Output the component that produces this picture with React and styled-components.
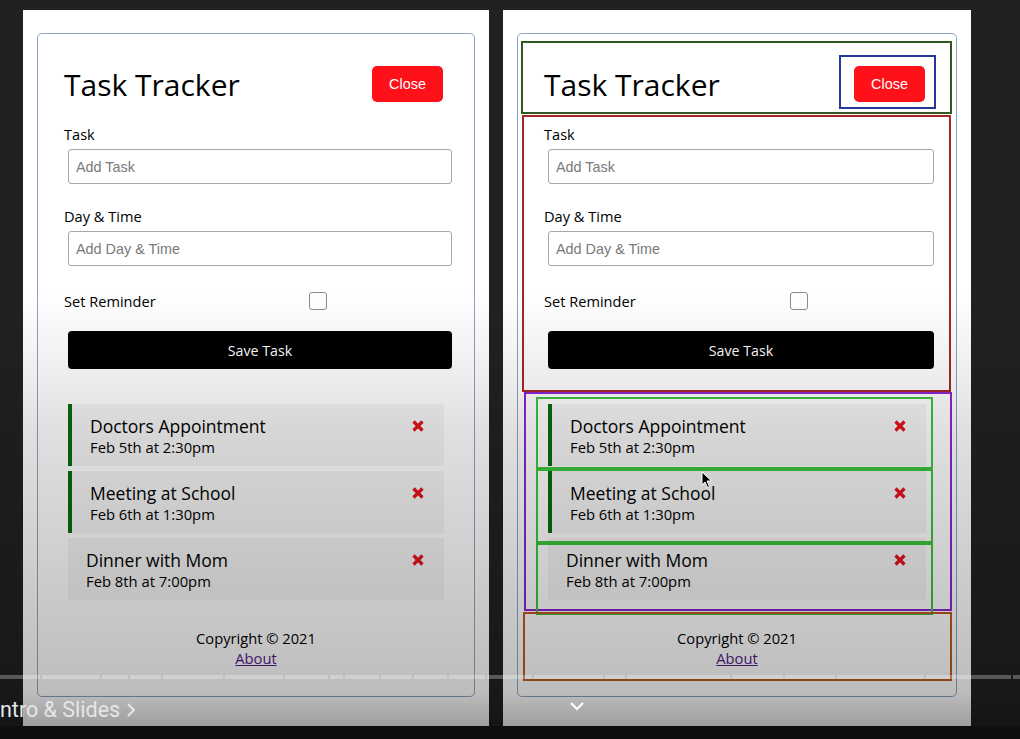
import React from "react";
import styled, { createGlobalStyle } from "styled-components";

const Global = createGlobalStyle`
  html, body { margin: 0; padding: 0; background: #212121; }
  body { width: 1020px; height: 739px; overflow: hidden; font-family: "Open Sans", "Noto Sans", sans-serif; }
  * { box-sizing: border-box; }
`;

const Stage = styled.div`
  position: relative;
  width: 1020px;
  height: 739px;
  background: #212121;
  overflow: hidden;
`;

const Panels = styled.div`
  display: flex;
  gap: 14px;
  padding: 10px 0 0 23px;
  height: 726px;
`;

const Panel = styled.div`
  width: ${(p) => p.$w}px;
  height: 716px;
  background: #ffffff;
  padding: 23px 14px 0;
`;

const BottomStrip = styled.div`
  height: 13px;
  background: #0f0f0f;
`;

const Card = styled.div`
  border: 1px solid #8aa3c3;
  border-radius: 5px;
  padding: 26px 26px 28px;
  display: flex;
  flex-direction: column;
`;

const Annot = styled.span`
  position: absolute;
  top: ${(p) => p.$i[0]}px;
  right: ${(p) => p.$i[1]}px;
  bottom: ${(p) => p.$i[2]}px;
  left: ${(p) => p.$i[3]}px;
  border: 2px solid ${(p) => p.$c};
  pointer-events: none;
  z-index: 2;
`;

const Header = styled.header`
  position: relative;
  display: flex;
  justify-content: space-between;
  align-items: center;
  height: 48px;
`;

const Title = styled.h1`
  margin: 0;
  font-size: 30px;
  font-weight: 500;
  color: #000;
`;

const BtnWrap = styled.div`
  position: relative;
  margin-right: 5px;
  display: flex;
`;

const CloseBtn = styled.button`
  width: 71px;
  height: 36px;
  border: none;
  border-radius: 5px;
  background: #ff111a;
  color: #fff;
  font-family: "Liberation Sans", Arial, sans-serif;
  font-size: 14.4px;
  padding: 0;
`;

const Form = styled.form`
  position: relative;
  margin-top: 17px;
  display: flex;
  flex-direction: column;
`;

const Group = styled.div`
  & + & {
    margin-top: 19px;
  }
`;

const Label = styled.label`
  display: block;
  font-size: 14.6px;
  line-height: 18px;
  font-weight: 500;
  color: #000;
`;

const TextInput = styled.input`
  display: block;
  width: 100%;
  height: 35px;
  margin: 6px 0 4px 4px;
  border: 1px solid #a8a8a8;
  border-radius: 3px;
  padding: 0 7px;
  font-family: "Liberation Sans", Arial, sans-serif;
  font-size: 14.4px;
  color: #222;
  background: #fff;
  &::placeholder {
    color: #7a7a7a;
  }
`;

const CheckRow = styled.div`
  display: grid;
  grid-template-columns: 1fr 2fr;
  align-items: center;
  height: 24px;
  margin-top: 19px;
`;

const Check = styled.input`
  appearance: none;
  justify-self: center;
  width: 18px;
  height: 18px;
  margin: 0 4px 0 0;
  border: 1px solid #8c8c8c;
  border-radius: 3px;
  background: #fff;
`;

const SaveBtn = styled.button`
  display: block;
  width: 100%;
  height: 38px;
  margin: 18px 0 4px 4px;
  border: none;
  border-radius: 4px;
  background: #000;
  color: #fff;
  font-family: inherit;
  font-size: 14.2px;
  font-weight: 500;
`;

const TaskList = styled.div`
  position: relative;
  margin-top: 31px;
  display: flex;
  flex-direction: column;
  gap: 5px;
`;

const Task = styled.div`
  position: relative;
  margin: 0 4px;
  height: 62px;
  background: #f4f4f4;
  padding: 11px 19px 9px 18px;
  border-left: ${(p) => (p.$reminder ? "4px solid #0a6b0a" : "none")};
`;

const TaskTitle = styled.h3`
  margin: 0;
  display: flex;
  justify-content: space-between;
  align-items: center;
  font-size: 17.5px;
  line-height: 22px;
  font-weight: 500;
  color: #000;
`;

const TaskDay = styled.p`
  margin: 0;
  font-size: 14.8px;
  line-height: 20px;
  font-weight: 500;
  color: #000;
`;

const Footer = styled.footer`
  position: relative;
  margin-top: 28px;
  text-align: center;
  font-size: 14.7px;
  line-height: 20px;
  font-weight: 500;
  p {
    margin: 0;
  }
  a {
    color: #551a8b;
    text-decoration: underline;
  }
`;

const Shade = styled.div`
  position: absolute;
  left: 0;
  right: 0;
  top: 290px;
  height: 436px;
  pointer-events: none;
  z-index: 5;
  background: linear-gradient(
    to bottom,
    rgba(0, 0, 0, 0) 0%,
    rgba(0, 0, 0, 0.07) 20%,
    rgba(0, 0, 0, 0.12) 32%,
    rgba(0, 0, 0, 0.2) 66%,
    rgba(0, 0, 0, 0.26) 92%,
    rgba(0, 0, 0, 0.38) 100%
  );
`;

const Progress = styled.div`
  position: absolute;
  left: 0;
  top: 675px;
  width: 1020px;
  height: 4px;
  display: flex;
  z-index: 6;
`;

const Segment = styled.div`
  height: 100%;
  margin-right: 2px;
  background: rgba(255, 255, 255, 0.27);
  flex: none;
`;

const Caption = styled.div`
  position: absolute;
  left: 0;
  top: 696px;
  z-index: 7;
  display: flex;
  align-items: center;
  gap: 6px;
  font-family: Roboto, "Liberation Sans", sans-serif;
  font-size: 21.5px;
  line-height: 28px;
  color: #e6e6e6;
`;

const Chevron = styled.svg`
  position: absolute;
  left: 569px;
  top: 700px;
  z-index: 7;
`;

const Cursor = styled.svg`
  position: absolute;
  left: 701px;
  top: 471px;
  z-index: 8;
`;

const bounds = [0, 42, 102, 130, 163, 225, 285, 330, 345, 381, 414, 449, 487, 534, 605, 627, 732, 785, 837, 926, 1013, 1022];

const tasks = [
  { text: "Doctors Appointment", day: "Feb 5th at 2:30pm", reminder: true, annot: [-7, -7, -3, -16] },
  { text: "Meeting at School", day: "Feb 6th at 1:30pm", reminder: true, annot: [-2, -7, -10, -16] },
  { text: "Dinner with Mom", day: "Feb 8th at 7:00pm", reminder: false, annot: [5, -7, -15, -12] },
];

const C = {
  header: "#2f5a1f",
  btn: "#24389c",
  form: "#a82626",
  list: "#8c25d2",
  task: "#3cc43c",
  footer: "#c05a1e",
};

function DeleteIcon() {
  return (
    <svg width="14" height="14" viewBox="0 0 14 14" aria-hidden="true">
      <path d="M2.5 2.5 L11.5 11.5 M11.5 2.5 L2.5 11.5" stroke="#e3121c" strokeWidth="3.2" strokeLinecap="butt" fill="none" />
    </svg>
  );
}

function Tracker({ annotated }) {
  return (
    <Card>
      <Header>
        {annotated && <Annot $c={C.header} $i={[-19, -22, -6, -23]} />}
        <Title>Task Tracker</Title>
        <BtnWrap>
          {annotated && <Annot $c={C.btn} $i={[-11, -11, -7, -15]} />}
          <CloseBtn type="button">Close</CloseBtn>
        </BtnWrap>
      </Header>
      <Form onSubmit={(e) => e.preventDefault()}>
        {annotated && <Annot $c={C.form} $i={[-10, -21, -19, -22]} />}
        <Group>
          <Label>Task</Label>
          <TextInput type="text" placeholder="Add Task" />
        </Group>
        <Group>
          <Label>Day &amp; Time</Label>
          <TextInput type="text" placeholder="Add Day & Time" />
        </Group>
        <CheckRow>
          <Label>Set Reminder</Label>
          <Check type="checkbox" />
        </CheckRow>
        <SaveBtn type="submit">Save Task</SaveBtn>
      </Form>
      <TaskList>
        {annotated && <Annot $c={C.list} $i={[-12, -22, -11, -20]} />}
        {tasks.map((t) => (
          <Task key={t.text} $reminder={t.reminder}>
            {annotated && <Annot $c={C.task} $i={t.annot} />}
            <TaskTitle>
              {t.text}
              <DeleteIcon />
            </TaskTitle>
            <TaskDay>{t.day}</TaskDay>
          </Task>
        ))}
      </TaskList>
      <Footer>
        {annotated && <Annot $c={C.footer} $i={[-16, -22, -13, -21]} />}
        <p>Copyright &copy; 2021</p>
        <a href="#about">About</a>
      </Footer>
    </Card>
  );
}

export default function App() {
  const segs = bounds.slice(1).map((b, i) => b - bounds[i] - 2);
  return (
    <Stage>
      <Global />
      <Panels>
        <Panel $w={466}>
          <Tracker />
        </Panel>
        <Panel $w={468}>
          <Tracker annotated />
        </Panel>
      </Panels>
      <BottomStrip />
      <Shade />
      <Progress>
        {segs.map((w, i) => (
          <Segment key={i} style={{ width: w }} />
        ))}
      </Progress>
      <Caption>
        <span>ntro &amp; Slides</span>
        <svg width="10" height="16" viewBox="0 0 10 16">
          <path d="M2 2 L8 8 L2 14" fill="none" stroke="#e6e6e6" strokeWidth="2" />
        </svg>
      </Caption>
      <Chevron width="16" height="12" viewBox="0 0 16 12">
        <path d="M2 3 L8 9 L14 3" fill="none" stroke="#ffffff" strokeWidth="2.2" />
      </Chevron>
      <Cursor width="12" height="18" viewBox="0 0 12 18">
        <path d="M1 1 L1 14 L4 11 L6.5 16.5 L8.5 15.5 L6 10 L10.5 10 Z" fill="#000" stroke="#fff" strokeWidth="1" strokeLinejoin="round" />
      </Cursor>
    </Stage>
  );
}
